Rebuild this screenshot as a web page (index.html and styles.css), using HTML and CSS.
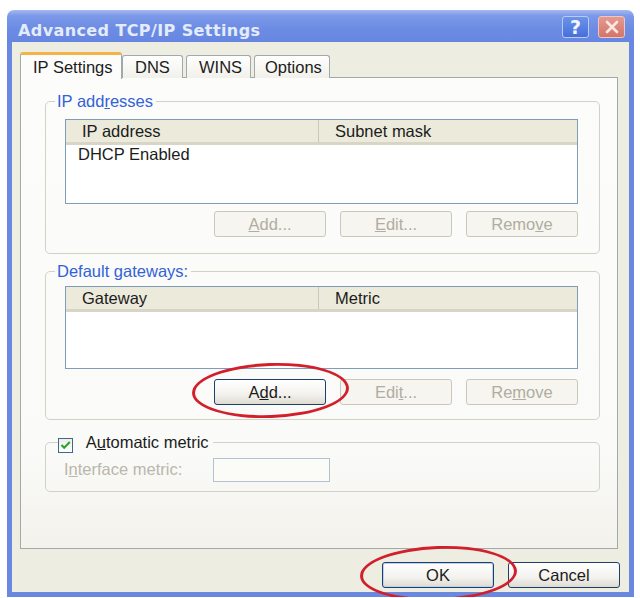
FILE: index.html
```html
<!DOCTYPE html>
<html lang="en">

<head>
    <meta charset="UTF-8">
    <meta name="viewport" content="width=device-width, initial-scale=1.0">
    <title>Advanced TCP/IP Settings</title>
    <link rel="stylesheet" href="styles.css">
</head>

<body>
    <div class="window">
        <div class="titlebar">
            <span class="title">Advanced TCP/IP Settings</span>
            <div class="caption-buttons">
                <span class="cap-btn help">?</span>
                <span class="cap-btn close">
                    <svg width="16" height="14" viewBox="0 0 16 14">
                        <path d="M3 2 L13 12 M13 2 L3 12" stroke="#fbe6e2" stroke-width="2.6" stroke-linecap="round" />
                    </svg>
                </span>
            </div>
        </div>

        <div class="client">
            <div class="tabs">
                <div class="tab active">IP Settings</div>
                <div class="tab">DNS</div>
                <div class="tab">WINS</div>
                <div class="tab">Options</div>
            </div>

            <div class="panel">
                <fieldset class="group">
                    <legend>IP add<u>r</u>esses</legend>
                    <div class="group-body ip-body">
                        <div class="listview ip-list">
                            <div class="lv-header">
                                <span class="lv-col">IP address</span>
                                <span class="lv-col">Subnet mask</span>
                            </div>
                            <div class="lv-row">DHCP Enabled</div>
                        </div>
                        <div class="button-row ip-buttons">
                            <button class="button" disabled><u>A</u>dd...</button>
                            <button class="button" disabled><u>E</u>dit...</button>
                            <button class="button" disabled>Remo<u>v</u>e</button>
                        </div>
                    </div>
                </fieldset>

                <fieldset class="group gateways">
                    <legend>Default gateways:</legend>
                    <div class="group-body gw-body">
                        <div class="listview gw-list">
                            <div class="lv-header">
                                <span class="lv-col">Gateway</span>
                                <span class="lv-col">Metric</span>
                            </div>
                        </div>
                        <div class="button-row gw-buttons">
                            <span class="marked">
                                <button class="button">A<u>d</u>d...</button>
                            </span>
                            <button class="button" disabled>Edi<u>t</u>...</button>
                            <button class="button" disabled>Re<u>m</u>ove</button>
                        </div>
                    </div>
                </fieldset>

                <fieldset class="group metric">
                    <legend>
                        <span class="checkbox">
                            <svg width="11" height="10" viewBox="0 0 11 10">
                                <path d="M1.5 5 L4.2 7.8 L9.8 2" fill="none" stroke="#2aa12a" stroke-width="2" />
                            </svg>
                        </span>
                        <span>A<u>u</u>tomatic metric</span>
                    </legend>
                    <div class="group-body metric-body">
                        <span class="field-label">I<u>n</u>terface metric:</span>
                        <span class="textbox"></span>
                    </div>
                </fieldset>
            </div>

            <div class="footer">
                <span class="marked">
                    <button class="button default">OK</button>
                </span>
                <button class="button">Cancel</button>
            </div>
        </div>
    </div>
</body>

</html>
```

FILE: styles.css
```css
body {
    margin: 0;
    background: #fff;
    font-family: "Liberation Sans", Arial, sans-serif;
    font-size: 16.5px;
    color: #1c1c1c;
}

/* window frame */
.window {
    margin: 10px 0 0 7px;
    width: 627px;
    height: 587px;
    display: flex;
    flex-direction: column;
}

.titlebar {
    flex: none;
    height: 32px;
    display: flex;
    align-items: center;
    justify-content: space-between;
    padding: 0 9px 0 11px;
    border-radius: 7px 7px 0 0;
    background: linear-gradient(#a3b9f1 0%, #7c99e8 18%, #6d8de4 55%, #6686e1 100%);
}

.title {
    font-family: "DejaVu Sans", sans-serif;
    font-weight: bold;
    font-size: 16px;
    letter-spacing: 0.4px;
    color: #e4ebfb;
    padding-top: 9px;
}

.caption-buttons {
    display: flex;
    gap: 9px;
    padding-top: 2px;
}

.cap-btn {
    width: 27px;
    height: 22px;
    border-radius: 3px;
    display: flex;
    align-items: center;
    justify-content: center;
    box-sizing: border-box;
}

.help {
    background: linear-gradient(#6b93ea, #4570da);
    border: 1px solid #b9cbf3;
    color: #f4f7ff;
    font: bold 19px "DejaVu Sans", sans-serif;
}

.close {
    background: linear-gradient(#e49a90, #d4746a);
    border: 1px solid #efc6c0;
}

.client {
    flex: 1;
    display: flex;
    flex-direction: column;
    background: #eeede2;
    border: 5px solid #6a88df;
    border-top: 0;
    padding: 10px 11px 0 8px;
}

/* tabs */
.tabs {
    display: flex;
    align-items: flex-end;
    height: 26px;
    position: relative;
    z-index: 1;
}

.tab {
    height: 23px;
    line-height: 22px;
    padding: 0 12px;
    margin-right: 3px;
    box-sizing: border-box;
    border: 1px solid #a2a9aa;
    border-bottom: 0;
    border-radius: 3px 3px 0 0;
    background: linear-gradient(#ffffff, #f1f0ea);
}

.tab.active {
    height: 27px;
    line-height: 24px;
    width: 102px;
    margin-right: 0;
    padding: 0 0 0 12px;
    border-top: 3px solid #f4b24a;
    background: #fcfcfb;
    margin-bottom: -1px;
}

.tab:nth-child(2) {
    width: 61px;
}

.tab:nth-child(3) {
    width: 65px;
    padding-left: 12px;
}

.tab:nth-child(4) {
    width: 76px;
    padding-left: 10px;
}

.panel {
    flex: 1;
    margin-top: -1px;
    padding: 14px 17px 0 24px;
    border: 1px solid #a2a9aa;
    background: linear-gradient(#fcfcfb 0%, #fafaf8 80%, #f3f2ec 100%);
}

/* group boxes */
.group {
    margin: 0;
    padding: 0;
    border: 1px solid #d3d1c6;
    border-radius: 5px;
}

.group legend {
    margin-left: 9px;
    padding: 0 3px 0 2px;
    line-height: 18px;
    color: #3262d6;
}

.gateways {
    margin-top: 8px;
}

.metric {
    margin-top: 13px;
}

.group-body {
    padding: 9px 21px 16px 19px;
}

.gw-body {
    padding-top: 6px;
    padding-bottom: 14px;
}

.metric-body {
    display: flex;
    align-items: center;
    gap: 31px;
    padding: 5px 0 9px 18px;
}

/* list views */
.listview {
    border: 1px solid #7f9db9;
    background: #fff;
}

.ip-list {
    height: 83px;
}

.gw-list {
    height: 81px;
}

.lv-header {
    display: flex;
    height: 22px;
    line-height: 22px;
    background: #ebeadb;
    border-bottom: 3px solid #d8d5c6;
}

.lv-col {
    padding-left: 16px;
    width: 236px;
}

.lv-col + .lv-col {
    border-left: 1px solid #cbc7b8;
    width: auto;
}

.lv-row {
    padding-left: 12px;
    line-height: 19px;
}

/* push buttons */
.button-row {
    display: flex;
    justify-content: flex-end;
    gap: 14px;
}

.ip-buttons {
    margin-top: 7px;
}

.gw-buttons {
    margin-top: 10px;
}

.button {
    width: 112px;
    height: 26px;
    padding: 0;
    font: inherit;
    color: #1c1c1c;
    border: 1px solid #1f3f6b;
    border-radius: 3px;
    background: linear-gradient(#ffffff, #f3f2ee 60%, #dedbd0);
}

.button:disabled {
    color: #b0ada2;
    border-color: #cac8bc;
    background: #f6f5ef;
}

.button.default {
    box-shadow: inset 0 0 0 1px #bcd0f0;
}

.marked {
    position: relative;
    display: inline-flex;
}

/* red call-out ring round a button */
.marked::after {
    content: "";
    position: absolute;
    top: -16px;
    right: -23px;
    bottom: -13px;
    left: -22px;
    border: 3px solid #d21f2c;
    border-radius: 50%;
    transform: rotate(-2deg);
    pointer-events: none;
}

/* automatic metric */
.checkbox {
    display: inline-flex;
    align-items: center;
    justify-content: center;
    width: 15px;
    height: 15px;
    box-sizing: border-box;
    border: 1px solid #3b6a8c;
    background: linear-gradient(#eeede6, #ffffff);
    vertical-align: -2px;
    margin-right: 9px;
}

.metric legend {
    margin-left: 12px;
    padding: 0 4px 0 0;
    color: #1c1c1c;
}

.field-label {
    color: #bab7ac;
}

.textbox {
    width: 117px;
    height: 24px;
    box-sizing: border-box;
    border: 1px solid #b3c2d3;
    background: #fbfbf8;
}

.footer {
    flex: none;
    height: 43px;
    display: flex;
    justify-content: flex-end;
    align-items: flex-start;
    gap: 14px;
    padding-top: 13px;
    box-sizing: border-box;
    margin-right: -2px;
}
```
